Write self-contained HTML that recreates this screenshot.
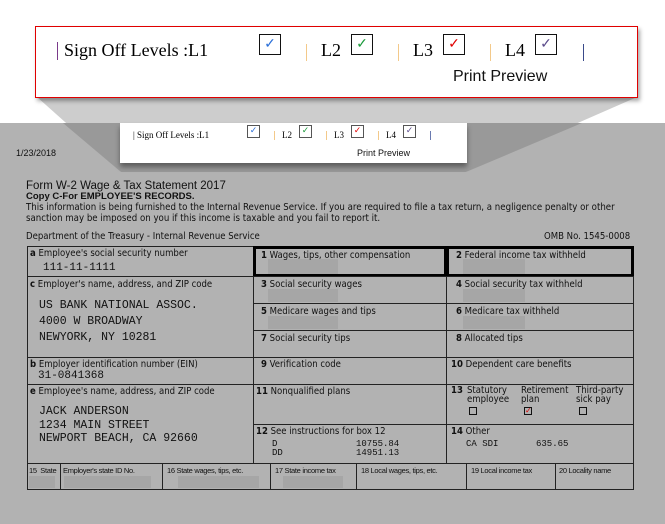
<!DOCTYPE html>
<html><head><meta charset="utf-8"><style>
*{margin:0;padding:0;box-sizing:border-box}
body{width:665px;height:524px;position:relative;overflow:hidden;background:#fff;font-family:"Liberation Sans",sans-serif}
.a{position:absolute;white-space:nowrap}
.serif{font-family:"Liberation Serif",serif;color:#000}
.cb{position:absolute;border:1.5px solid #111;background:#fff}
.cb span{position:absolute;left:0;right:0;text-align:center}
.sep{position:absolute;width:1px;background:#f3c98a}
.f{font-family:"DejaVu Sans Condensed","DejaVu Sans",sans-serif;font-size:9.5px;color:#111}
.m{font-family:"Liberation Mono",monospace;color:#111}
.bl{position:absolute;border:1px solid #222}
.gb{position:absolute;background:#a6a6a6}
.b{font-weight:bold}
.s{font-family:"Liberation Sans Narrow","Liberation Sans",sans-serif;font-size:7.5px;color:#111;letter-spacing:-0.3px}
</style></head><body>
<svg class="a" style="left:0;top:0" width="665" height="524">
<rect x="0" y="123" width="665" height="401" fill="#b2b2b2"/>
<polygon points="37,97 637,97 466,172 121,172" fill="#cdcdcd"/>
<polygon points="63,123 582,123 466,172 121,172" fill="#999"/>
</svg>
<!-- callout -->
<div class="a" style="left:35px;top:26px;width:603px;height:72px;border:1px solid #e00000;background:#fff;box-shadow:2px 3px 4px rgba(0,0,0,.35)"></div>
<div class="a" style="left:57px;top:42px;width:1px;height:18px;background:#7a3a8a"></div>
<div class="a serif" style="left:64px;top:40px;font-size:18px">Sign Off Levels :L1</div>
<div class="cb" style="left:259px;top:34px;width:22px;height:21px"><span style="color:#2a6fd8;font-size:14px;top:0px">✓</span></div>
<div class="sep" style="left:306px;top:44px;height:17px"></div>
<div class="a serif" style="left:321px;top:40px;font-size:18px">L2</div>
<div class="cb" style="left:351px;top:34px;width:22px;height:21px"><span style="color:#1a9a3a;font-size:14px;top:0px">✓</span></div>
<div class="sep" style="left:398px;top:44px;height:17px"></div>
<div class="a serif" style="left:413px;top:40px;font-size:18px">L3</div>
<div class="cb" style="left:443px;top:34px;width:22px;height:21px"><span style="color:#e00000;font-size:14px;top:0px">✓</span></div>
<div class="sep" style="left:490px;top:44px;height:17px"></div>
<div class="a serif" style="left:505px;top:40px;font-size:18px">L4</div>
<div class="cb" style="left:535px;top:34px;width:22px;height:21px"><span style="color:#5a4a8a;font-size:14px;top:0px">✓</span></div>
<div class="a" style="left:583px;top:44px;width:1px;height:17px;background:#3a4a8a"></div>
<div class="a" style="left:453px;top:68px;font-size:16px;color:#111">Print Preview</div>
<!-- small panel -->
<div class="a" style="left:120px;top:123px;width:347px;height:40px;background:#fff;box-shadow:0 4px 5px rgba(0,0,0,.4)"></div>
<div class="a serif" style="left:133px;top:130px;font-size:9px">| Sign Off Levels :L1</div>
<div class="cb" style="left:247px;top:125px;width:13px;height:13px;border-width:1px;border-color:#555"><span style="color:#2a6fd8;font-size:9px;top:-1px">✓</span></div>
<div class="sep" style="left:274px;top:131px;height:9px"></div>
<div class="a serif" style="left:282px;top:130px;font-size:9px">L2</div>
<div class="cb" style="left:299px;top:125px;width:13px;height:13px;border-width:1px;border-color:#555"><span style="color:#1a9a3a;font-size:9px;top:-1px">✓</span></div>
<div class="sep" style="left:326px;top:131px;height:9px"></div>
<div class="a serif" style="left:334px;top:130px;font-size:9px">L3</div>
<div class="cb" style="left:351px;top:125px;width:13px;height:13px;border-width:1px;border-color:#555"><span style="color:#e00000;font-size:9px;top:-1px">✓</span></div>
<div class="sep" style="left:378px;top:131px;height:9px"></div>
<div class="a serif" style="left:386px;top:130px;font-size:9px">L4</div>
<div class="cb" style="left:403px;top:125px;width:13px;height:13px;border-width:1px;border-color:#555"><span style="color:#5a4a8a;font-size:9px;top:-1px">✓</span></div>
<div class="a" style="left:430px;top:131px;width:1px;height:9px;background:#6a7ab0"></div>
<div class="a" style="left:357px;top:148px;font-size:9px;color:#111">Print Preview</div>
<!-- page -->
<div class="a" style="left:16px;top:148px;font-size:9px;color:#111">1/23/2018</div>
<div class="a" style="left:26px;top:180px;font-size:11.5px;color:#111">Form W-2 Wage &amp; Tax Statement 2017</div>
<div class="a b" style="left:26px;top:191px;font-size:9.5px;color:#111">Copy C-For EMPLOYEE'S RECORDS.</div>
<div class="a f" style="left:26px;top:203px;line-height:10.5px;font-size:9.6px">This information is being furnished to the Internal Revenue Service. If you are required to file a tax return, a negligence penalty or other<br>sanction may be imposed on you if this income is taxable and you fail to report it.</div>
<div class="a f" style="left:26px;top:231px">Department of the Treasury - Internal Revenue Service</div>
<div class="a f" style="left:544px;top:231px">OMB No. 1545-0008</div>
<!-- table -->
<div class="bl" style="left:27px;top:246px;width:607px;height:244px;border-width:1.5px"></div>
<div class="bl" style="left:27px;top:246px;width:227px;height:31px"></div>
<div class="bl" style="left:27px;top:276px;width:227px;height:82px"></div>
<div class="bl" style="left:27px;top:357px;width:227px;height:28px"></div>
<div class="bl" style="left:27px;top:384px;width:227px;height:80px"></div>
<div class="bl" style="left:253px;top:246px;width:194px;height:31px;border:3px solid #000"></div>
<div class="bl" style="left:446px;top:246px;width:188px;height:31px;border:3px solid #000"></div>
<div class="bl" style="left:253px;top:276px;width:194px;height:28px"></div>
<div class="bl" style="left:253px;top:303px;width:194px;height:28px"></div>
<div class="bl" style="left:253px;top:330px;width:194px;height:28px"></div>
<div class="bl" style="left:253px;top:357px;width:194px;height:28px"></div>
<div class="bl" style="left:253px;top:384px;width:194px;height:41px"></div>
<div class="bl" style="left:253px;top:424px;width:194px;height:40px"></div>
<div class="bl" style="left:446px;top:276px;width:188px;height:28px"></div>
<div class="bl" style="left:446px;top:303px;width:188px;height:28px"></div>
<div class="bl" style="left:446px;top:330px;width:188px;height:28px"></div>
<div class="bl" style="left:446px;top:357px;width:188px;height:28px"></div>
<div class="bl" style="left:446px;top:384px;width:188px;height:41px"></div>
<div class="bl" style="left:446px;top:424px;width:188px;height:40px"></div>
<div class="bl" style="left:27px;top:463px;width:607px;height:27px;border-width:1.5px"></div>
<div class="a" style="left:60px;top:463px;width:1px;height:27px;background:#222"></div>
<div class="a" style="left:162px;top:463px;width:1px;height:27px;background:#222"></div>
<div class="a" style="left:270px;top:463px;width:1px;height:27px;background:#222"></div>
<div class="a" style="left:356px;top:463px;width:1px;height:27px;background:#222"></div>
<div class="a" style="left:466px;top:463px;width:1px;height:27px;background:#222"></div>
<div class="a" style="left:555px;top:463px;width:1px;height:27px;background:#222"></div>
<!-- gray blocks -->
<div class="gb" style="left:268px;top:259px;width:70px;height:15px"></div>
<div class="gb" style="left:463px;top:259px;width:62px;height:15px"></div>
<div class="gb" style="left:268px;top:289px;width:70px;height:13px"></div>
<div class="gb" style="left:463px;top:289px;width:62px;height:13px"></div>
<div class="gb" style="left:268px;top:316px;width:70px;height:13px"></div>
<div class="gb" style="left:463px;top:316px;width:62px;height:13px"></div>
<div class="gb" style="left:29px;top:476px;width:26px;height:12px"></div>
<div class="gb" style="left:64px;top:476px;width:87px;height:12px"></div>
<div class="gb" style="left:178px;top:476px;width:81px;height:12px"></div>
<div class="gb" style="left:283px;top:476px;width:60px;height:12px"></div>
<!-- labels -->
<div class="a f" style="left:30px;top:248px"><b>a</b> Employee's social security number</div>
<div class="a m" style="left:43px;top:262px;font-size:11px">111-11-1111</div>
<div class="a f" style="left:30px;top:279px"><b>c</b> Employer's name, address, and ZIP code</div>
<div class="a m" style="left:39px;top:298px;font-size:11.5px;line-height:16px">US BANK NATIONAL ASSOC.<br>4000 W BROADWAY<br>NEWYORK, NY 10281</div>
<div class="a f" style="left:30px;top:359px"><b>b</b> Employer identification number (EIN)</div>
<div class="a m" style="left:38px;top:370px;font-size:11px">31-0841368</div>
<div class="a f" style="left:30px;top:386px"><b>e</b> Employee's name, address, and ZIP code</div>
<div class="a m" style="left:39px;top:405px;font-size:11.5px;line-height:13.5px">JACK ANDERSON<br>1234 MAIN STREET<br>NEWPORT BEACH, CA 92660</div>
<div class="a f" style="left:261px;top:250px"><b>1</b> Wages, tips, other compensation</div>
<div class="a f" style="left:456px;top:250px"><b>2</b> Federal income tax withheld</div>
<div class="a f" style="left:261px;top:279px"><b>3</b> Social security wages</div>
<div class="a f" style="left:456px;top:279px"><b>4</b> Social security tax withheld</div>
<div class="a f" style="left:261px;top:306px"><b>5</b> Medicare wages and tips</div>
<div class="a f" style="left:456px;top:306px"><b>6</b> Medicare tax withheld</div>
<div class="a f" style="left:261px;top:333px"><b>7</b> Social security tips</div>
<div class="a f" style="left:456px;top:333px"><b>8</b> Allocated tips</div>
<div class="a f" style="left:261px;top:359px"><b>9</b> Verification code</div>
<div class="a f" style="left:451px;top:359px"><b>10</b> Dependent care benefits</div>
<div class="a f" style="left:256px;top:386px"><b>11</b> Nonqualified plans</div>
<div class="a f" style="left:256px;top:426px"><b>12</b> See instructions for box 12</div>
<div class="a m" style="left:272px;top:440px;font-size:9px;line-height:9px">D<br>DD</div>
<div class="a m" style="left:356px;top:440px;font-size:9px;line-height:9px">10755.84<br>14951.13</div>
<div class="a f" style="left:451px;top:386px;line-height:9px"><b>13</b></div>
<div class="a f" style="left:467px;top:386px;line-height:9px">Statutory<br>employee</div>
<div class="a f" style="left:521px;top:386px;line-height:9px">Retirement<br>plan</div>
<div class="a f" style="left:576px;top:386px;line-height:9px">Third-party<br>sick pay</div>
<div class="a" style="left:469px;top:407px;width:8px;height:8px;border:1.2px solid #111"></div>
<div class="a" style="left:524px;top:407px;width:8px;height:8px;border:1.2px solid #111;color:#d00;font-size:8px;line-height:6px">✓</div>
<div class="a" style="left:579px;top:407px;width:8px;height:8px;border:1.2px solid #111"></div>
<div class="a f" style="left:451px;top:426px"><b>14</b> Other</div>
<div class="a m" style="left:466px;top:439px;font-size:9px">CA SDI</div>
<div class="a m" style="left:536px;top:439px;font-size:9px">635.65</div>
<div class="a s" style="left:29px;top:466px">15 &nbsp;State</div>
<div class="a s" style="left:63px;top:466px">Employer's state ID No.</div>
<div class="a s" style="left:167px;top:466px">16 State wages, tips, etc.</div>
<div class="a s" style="left:275px;top:466px">17 State income tax</div>
<div class="a s" style="left:361px;top:466px">18 Local wages, tips, etc.</div>
<div class="a s" style="left:471px;top:466px">19 Local income tax</div>
<div class="a s" style="left:559px;top:466px">20 Locality name</div>
</body></html>
